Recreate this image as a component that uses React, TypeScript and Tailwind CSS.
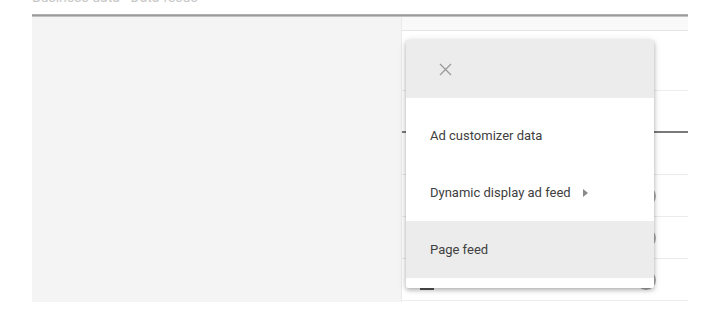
import React from "react";

const font = { fontFamily: "Roboto, 'Liberation Sans', sans-serif" };

function RadioRow({ last }: { last?: boolean }) {
  return (
    <div className="h-[42px] border-b border-[#ececec] flex items-center pl-[234px] relative">
      <div className="w-[20px] h-[20px] rounded-full border-2 border-[#a8a8a8]" />
      {last && <div className="absolute left-[18px] bottom-[10px] w-[14px] h-[2px] bg-[#555]" />}
    </div>
  );
}

export default function App() {
  const items = [
    { label: "Ad customizer data", sub: false, active: false },
    { label: "Dynamic display ad feed", sub: true, active: false },
    { label: "Page feed", sub: false, active: true },
  ];

  return (
    <div className="w-[720px] h-[332px] bg-white relative overflow-hidden" style={font}>
      {/* cut-off title */}
      <div className="h-[14px] overflow-hidden pl-[32px]">
        <div className="-mt-[12px] text-[14px] leading-[18px] text-[#c8c8c8]">Business data · Data feeds</div>
      </div>
      <div className="ml-[32px] w-[656px] h-[3px] bg-gradient-to-b from-[#bdbdbd] via-[#9a9a9a] to-[#d6d6d6]" />

      <div className="ml-[32px] w-[656px] flex">
        {/* left panel */}
        <div className="w-[370px] h-[285px] bg-[#f4f4f4] border-r border-[#ebebeb]" />

        {/* right panel */}
        <div className="w-[286px] bg-white">
          <div className="h-[14px] bg-[#f9f9f9] border-b border-[#e4e4e4]" />
          <div className="h-[60px] border-b border-[#ededed]" />
          <div className="h-[84px] border-b border-[#ececec] pt-[40px]">
            <div className="h-[2px] bg-[#7a7a7a]" />
          </div>
          <RadioRow />
          <RadioRow />
          <RadioRow last />
        </div>
      </div>

      {/* dropdown menu */}
      <div className="absolute left-[406px] top-[40px] w-[248px] bg-white rounded-[2px] shadow-[0_2px_4px_rgba(0,0,0,0.25),0_1px_8px_rgba(0,0,0,0.12)]">
        <div className="h-[58px] bg-[#ececec] flex items-center pl-[33px]">
          <svg width="13" height="13" viewBox="0 0 13 13" fill="none">
            <path d="M1 1L12 12M12 1L1 12" stroke="#9a9a9a" strokeWidth="1.3" />
          </svg>
        </div>
        <div className="pt-[9px] pb-[10px]">
          {items.map((it) => (
            <div
              key={it.label}
              className={`h-[57px] flex items-center pl-[24px] text-[13px] text-[#404040] ${it.active ? "bg-[#ececec]" : ""}`}
            >
              <span>{it.label}</span>
              {it.sub && (
                <svg className="ml-[12px]" width="5" height="8" viewBox="0 0 5 8">
                  <path d="M0 0L5 4L0 8Z" fill="#8a8a8a" />
                </svg>
              )}
            </div>
          ))}
        </div>
      </div>
    </div>
  );
}
